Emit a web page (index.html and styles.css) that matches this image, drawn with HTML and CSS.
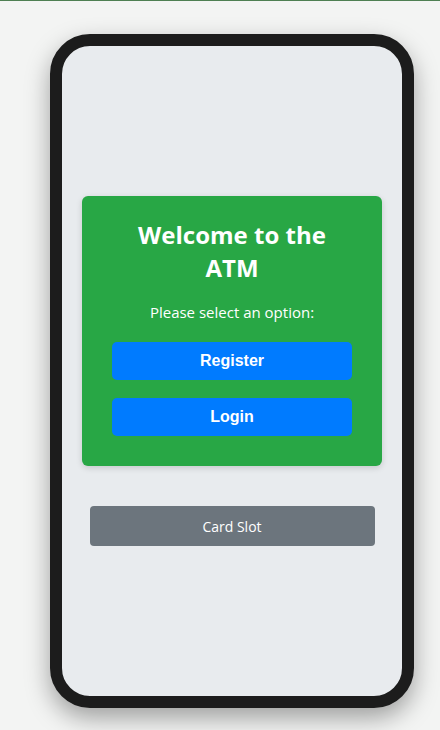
FILE: index.html
```html
<!DOCTYPE html>
<html>
<head>
<meta charset="utf-8">
<link rel="stylesheet" href="styles.css">
</head>
<body>
<div class="page">
  <div class="phone">
    <div class="screen">
      <div class="card">
        <h2 class="title">Welcome to the ATM</h2>
        <p class="subtitle">Please select an option:</p>
        <button class="btn">Register</button>
        <button class="btn">Login</button>
      </div>
      <div class="slot">Card Slot</div>
    </div>
  </div>
</div>
</body>
</html>
```
FILE: styles.css
```css
html, body {
  margin: 0;
  padding: 0;
}
body {
  background: #f3f4f3;
  border-top: 1px solid #4e7f52;
  font-family: "Open Sans", "Noto Sans", sans-serif;
  height: 729px;
  overflow: hidden;
}
.page {
  padding-top: 33px;
  padding-left: 50px;
}
.phone {
  width: 340px;
  height: 650px;
  border: 12px solid #1c1c1c;
  border-radius: 40px;
  background: #e8ebee;
  box-shadow: 0 10px 25px rgba(0, 0, 0, 0.35);
  overflow: hidden;
}
.screen {
  height: 100%;
  display: flex;
  flex-direction: column;
  align-items: center;
  justify-content: center;
}
.card {
  width: 300px;
  box-sizing: border-box;
  background: #28a745;
  border-radius: 6px;
  padding: 22px 30px 30px;
  box-shadow: 0 2px 6px rgba(0, 0, 0, 0.15);
  display: flex;
  flex-direction: column;
  align-items: center;
  color: #fff;
}
.title {
  margin: 0;
  font-size: 24px;
  line-height: 33px;
  font-weight: 700;
  text-align: center;
  width: 210px;
}
.subtitle {
  margin: 18px 0 20px;
  font-size: 15px;
  line-height: 20px;
}
.btn {
  width: 240px;
  height: 38px;
  border: none;
  border-radius: 5px;
  background: #007bff;
  color: #fff;
  font-family: "Liberation Sans", Arial, sans-serif;
  font-weight: 700;
  font-size: 16px;
}
.btn + .btn {
  margin-top: 18px;
}
.slot {
  margin-top: 40px;
  width: 285px;
  height: 40px;
  border-radius: 4px;
  background: #6c757d;
  color: #fff;
  font-size: 14px;
  display: flex;
  align-items: center;
  justify-content: center;
}
```
